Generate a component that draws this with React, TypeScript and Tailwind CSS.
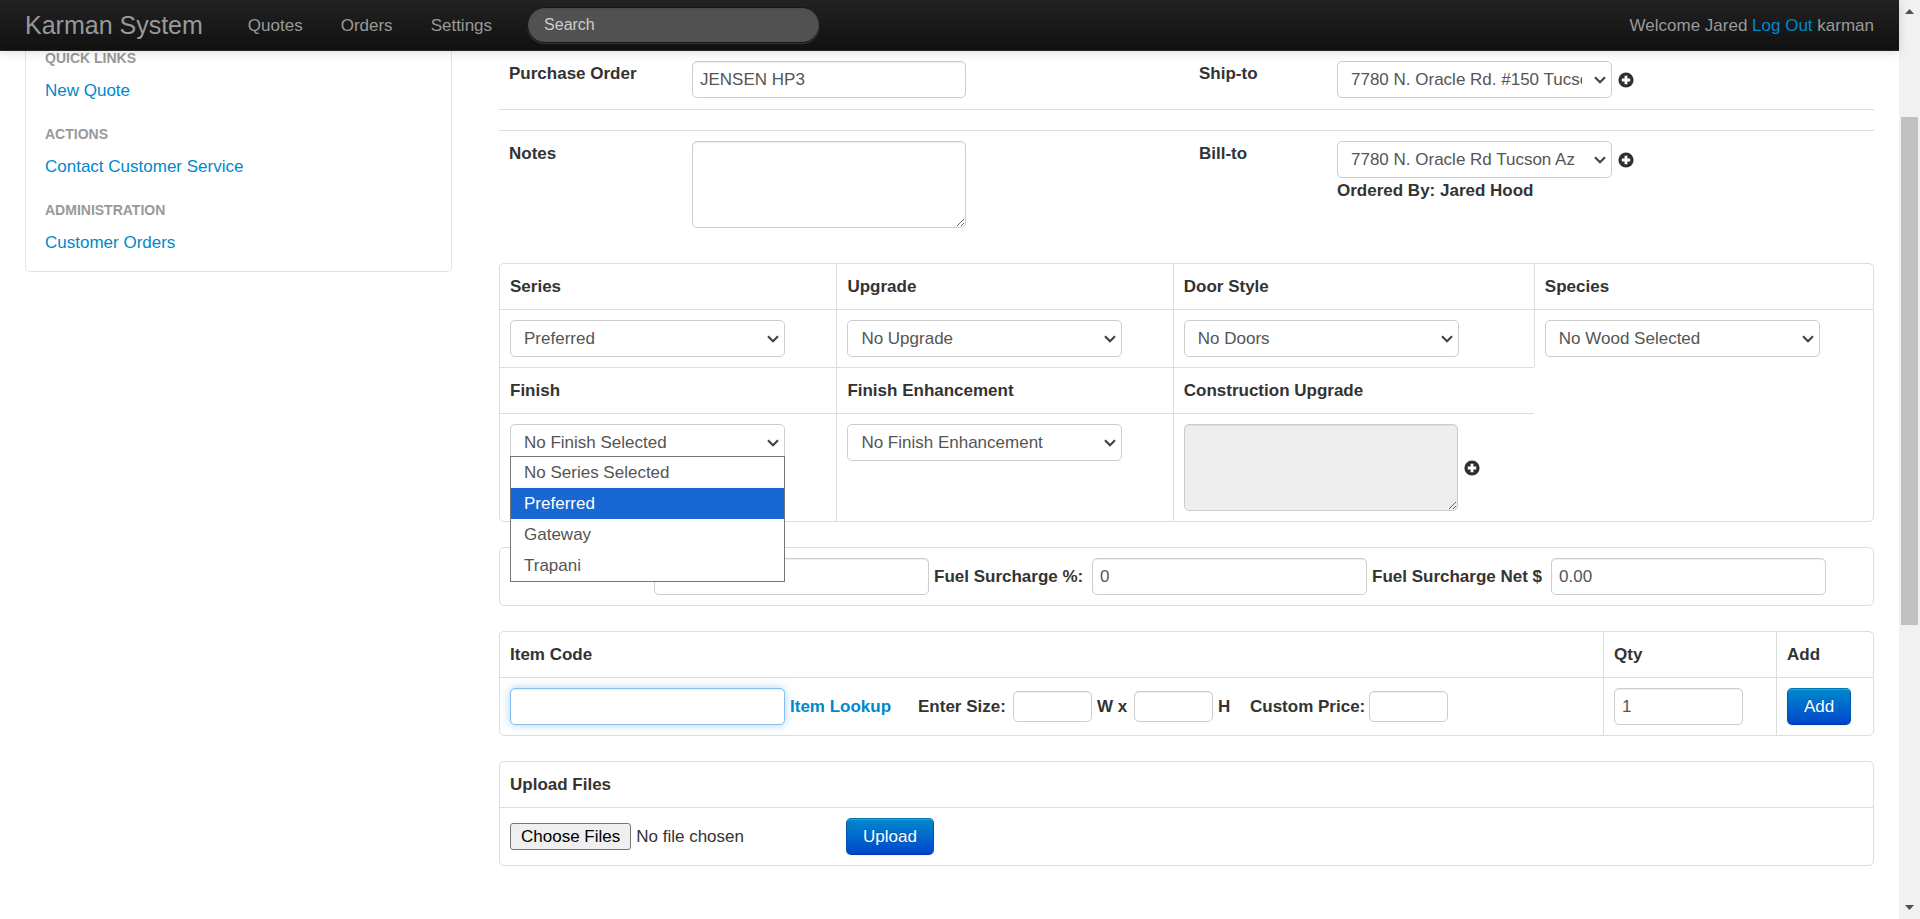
import React, { useState } from "react";
import clsx from "clsx";

interface Option {
  value: string;
  label: string;
}

interface SelectBoxProps {
  id: string;
  options: Option[];
  children?: React.ReactNode;
}

const seriesOptions: Option[] = [
  { value: "preferred", label: "Preferred" },
  { value: "none", label: "No Series Selected" },
  { value: "gateway", label: "Gateway" },
  { value: "trapani", label: "Trapani" },
];

const menuItems = ["No Series Selected", "Preferred", "Gateway", "Trapani"];

const sideLinks = [
  { header: "Quick Links", link: "New Quote" },
  { header: "Actions", link: "Contact Customer Service" },
  { header: "Administration", link: "Customer Orders" },
];

const fieldClass =
  "block h-[37px] rounded-[5px] border border-[#ccc] bg-white px-[7px] text-[#555] shadow-[inset_0_1px_1px_rgba(0,0,0,0.075)] outline-none";
const areaClass =
  "block h-[87px] w-[274px] resize rounded-[5px] border border-[#ccc] px-[7px] py-[4px] text-[#555] shadow-[inset_0_1px_1px_rgba(0,0,0,0.075)] outline-none";
const smallFieldClass =
  "block h-[31px] w-[79px] rounded-[5px] border border-[#ccc] bg-white px-[7px] text-[#555] shadow-[inset_0_1px_1px_rgba(0,0,0,0.075)] outline-none";
const buttonClass =
  "h-[37px] rounded-[5px] border border-[#0055b3] border-t-[#0077b3] border-b-[#003bb3] bg-linear-to-b from-[#0088cc] to-[#0044cc] px-[16px] text-white shadow-[inset_0_1px_0_rgba(255,255,255,0.2),0_1px_2px_rgba(0,0,0,0.05)] [text-shadow:0_-1px_0_rgba(0,0,0,0.25)]";
const cardClass = "mt-[25px] w-full border-separate border-spacing-0 rounded-[5px] border border-[#ddd]";
const headClass = "p-[10px] text-left align-top font-bold";
const cellClass = "border-t border-[#ddd] p-[10px] align-top";

function PlusIcon() {
  return (
    <svg width="16" height="16" viewBox="0 0 16 16" aria-hidden="true">
      <circle cx="8" cy="8" r="7.6" fill="#2f2f2f" />
      <path d="M6.6 3.8h2.8v2.8h2.8v2.8H9.4v2.8H6.6V9.4H3.8V6.6h2.8z" fill="#fff" />
    </svg>
  );
}

function SelectBox({ id, options, children }: SelectBoxProps) {
  return (
    <div className="relative w-[275px]">
      <select
        id={id}
        className="block h-[37px] w-full appearance-none rounded-[5px] border border-[#ccc] bg-white pr-[29px] pl-[13px] text-[#555] outline-none"
      >
        {options.map((o) => (
          <option key={o.value} value={o.value}>
            {o.label}
          </option>
        ))}
      </select>
      <svg
        className="pointer-events-none absolute top-[15px] right-[6px]"
        width="12"
        height="8"
        viewBox="0 0 12 8"
        fill="none"
        stroke="#444"
        strokeWidth="2.2"
        aria-hidden="true"
      >
        <path d="M1 1.3l5 5 5-5" />
      </svg>
      {children}
    </div>
  );
}

function Navbar() {
  return (
    <header className="relative z-20 flex h-[51px] items-center border-b border-[#252525] bg-linear-to-b from-[#222] to-[#111] px-[25px] text-[#999] shadow-[0_1px_10px_rgba(0,0,0,0.15)]">
      <a href="#" className="mr-[45px] text-[25px]">
        Karman System
      </a>
      <nav className="flex gap-[38px]">
        <a href="#">Quotes</a>
        <a href="#">Orders</a>
        <a href="#">Settings</a>
      </nav>
      <input
        type="text"
        placeholder="Search"
        aria-label="Search"
        className="ml-[35px] h-[36px] w-[293px] rounded-full border border-[#151515] bg-[#515151] px-[16px] text-[16px] text-white shadow-[inset_0_1px_2px_rgba(0,0,0,0.1),0_1px_0_rgba(255,255,255,0.15)] outline-none placeholder:text-[#ccc]"
      />
      <p className="ml-auto">
        Welcome Jared{" "}
        <a href="#" className="text-[#0088cc]">
          Log Out
        </a>{" "}
        karman
      </p>
    </header>
  );
}

function Sidebar() {
  return (
    <aside className="flex min-w-0 flex-col gap-[25px] self-start rounded-b-[5px] border border-t-0 border-[#e3e3e3] px-[19px] pt-[1px] pb-[16px]">
      {sideLinks.map((item) => (
        <div key={item.header}>
          <h3 className="text-[14px] leading-[13px] font-bold text-[#999] uppercase">{item.header}</h3>
          <a href="#" className="mt-[13px] block text-[#0088cc]">
            {item.link}
          </a>
        </div>
      ))}
    </aside>
  );
}

function SeriesMenu() {
  const [active, setActive] = useState(1);

  return (
    <ul role="listbox" aria-label="Series" className="absolute top-[32px] left-0 z-10 w-full border border-[#767676] bg-white">
      {menuItems.map((name, i) => (
        <li
          key={name}
          role="option"
          aria-selected={i === active}
          onMouseEnter={() => setActive(i)}
          className={clsx("h-[31px] px-[13px] leading-[31px]", i === active ? "bg-[#1967d2] text-white" : "text-[#555]")}
        >
          {name}
        </li>
      ))}
    </ul>
  );
}

function OrderDetails() {
  return (
    <>
      <div className="grid grid-cols-[183fr_507fr_138fr_547fr] border-b border-[#ddd] pt-[10px] pb-[11px]">
        <label htmlFor="po" className="pl-[10px] font-bold">
          Purchase Order
        </label>
        <div className="pl-[10px]">
          <input id="po" type="text" defaultValue="JENSEN HP3" className={clsx(fieldClass, "w-[274px]")} />
        </div>
        <label htmlFor="ship-to" className="pl-[10px] font-bold">
          Ship-to
        </label>
        <div className="flex items-center gap-[6px] pl-[10px]">
          <SelectBox id="ship-to" options={[{ value: "150", label: "7780 N. Oracle Rd. #150 Tucson Az" }]} />
          <button type="button" aria-label="Add ship-to address">
            <PlusIcon />
          </button>
        </div>
      </div>

      <div className="mt-[20px] grid grid-cols-[183fr_507fr_138fr_547fr] border-t border-[#ddd] py-[10px]">
        <label htmlFor="notes" className="pl-[10px] font-bold">
          Notes
        </label>
        <div className="pl-[10px]">
          <textarea id="notes" className={clsx(areaClass, "bg-white")} />
        </div>
        <label htmlFor="bill-to" className="pl-[10px] font-bold">
          Bill-to
        </label>
        <div className="pl-[10px]">
          <div className="flex items-center gap-[6px]">
            <SelectBox id="bill-to" options={[{ value: "az", label: "7780 N. Oracle Rd Tucson Az" }]} />
            <button type="button" aria-label="Add bill-to address">
              <PlusIcon />
            </button>
          </div>
          <p className="font-bold">Ordered By: Jared Hood</p>
        </div>
      </div>
    </>
  );
}

function SpecsTable() {
  return (
    <table className={clsx(cardClass, "table-fixed")}>
      <colgroup>
        <col className="w-[24.5%]" />
        <col className="w-[24.5%]" />
        <col className="w-[26.3%]" />
        <col />
      </colgroup>
      <tbody>
        <tr>
          <th className={headClass}>
            <label htmlFor="series">Series</label>
          </th>
          <th className={clsx(headClass, "border-l border-[#ddd]")}>
            <label htmlFor="upgrade">Upgrade</label>
          </th>
          <th className={clsx(headClass, "border-l border-[#ddd]")}>
            <label htmlFor="door-style">Door Style</label>
          </th>
          <th className={clsx(headClass, "border-l border-[#ddd]")}>
            <label htmlFor="species">Species</label>
          </th>
        </tr>
        <tr>
          <td className={cellClass}>
            <SelectBox id="series" options={seriesOptions} />
          </td>
          <td className={clsx(cellClass, "border-l")}>
            <SelectBox id="upgrade" options={[{ value: "none", label: "No Upgrade" }]} />
          </td>
          <td className={clsx(cellClass, "border-l")}>
            <SelectBox id="door-style" options={[{ value: "none", label: "No Doors" }]} />
          </td>
          <td className={clsx(cellClass, "border-l")}>
            <SelectBox id="species" options={[{ value: "none", label: "No Wood Selected" }]} />
          </td>
        </tr>
        <tr>
          <th className={clsx(headClass, "border-t border-[#ddd]")}>
            <label htmlFor="finish">Finish</label>
          </th>
          <th className={clsx(headClass, "border-t border-l border-[#ddd]")}>
            <label htmlFor="enhancement">Finish Enhancement</label>
          </th>
          <th className={clsx(headClass, "border-t border-l border-[#ddd]")}>
            <label htmlFor="construction">Construction Upgrade</label>
          </th>
        </tr>
        <tr>
          <td className={cellClass}>
            <SelectBox id="finish" options={[{ value: "none", label: "No Finish Selected" }]}>
              <SeriesMenu />
            </SelectBox>
          </td>
          <td className={clsx(cellClass, "border-l")}>
            <SelectBox id="enhancement" options={[{ value: "none", label: "No Finish Enhancement" }]} />
          </td>
          <td className={clsx(cellClass, "border-l")}>
            <div className="flex items-center gap-[6px]">
              <textarea id="construction" readOnly className={clsx(areaClass, "bg-[#eee]")} />
              <button type="button" aria-label="Add construction upgrade">
                <PlusIcon />
              </button>
            </div>
          </td>
        </tr>
      </tbody>
    </table>
  );
}

function SurchargeRow() {
  return (
    <div className="mt-[25px] flex items-center gap-[5px] rounded-[5px] border border-[#ddd] py-[10px] pr-[10px] pl-[154px] font-bold">
      <input type="text" aria-label="Discount" className={clsx(fieldClass, "w-[275px] font-normal")} />
      <label htmlFor="fuel-percent" className="w-[153px]">
        Fuel Surcharge %:
      </label>
      <input id="fuel-percent" type="text" defaultValue="0" className={clsx(fieldClass, "w-[275px] font-normal")} />
      <label htmlFor="fuel-net" className="w-[174px]">
        Fuel Surcharge Net $
      </label>
      <input id="fuel-net" type="text" defaultValue="0.00" className={clsx(fieldClass, "w-[275px] font-normal")} />
    </div>
  );
}

function ItemTable() {
  return (
    <table className={clsx(cardClass, "table-fixed")}>
      <colgroup>
        <col />
        <col className="w-[173px]" />
        <col className="w-[97px]" />
      </colgroup>
      <thead>
        <tr>
          <th className={headClass}>
            <label htmlFor="item-code">Item Code</label>
          </th>
          <th className={clsx(headClass, "border-l border-[#ddd]")}>
            <label htmlFor="qty">Qty</label>
          </th>
          <th className={clsx(headClass, "border-l border-[#ddd]")}>Add</th>
        </tr>
      </thead>
      <tbody>
        <tr>
          <td className={cellClass}>
            <div className="flex items-center gap-[5px] font-bold">
              <input
                id="item-code"
                type="text"
                className="block h-[37px] w-[275px] rounded-[5px] border border-[#86bfee] bg-white px-[7px] font-normal text-[#555] shadow-[inset_0_1px_1px_rgba(0,0,0,0.075),0_0_9px_rgba(82,168,236,0.5)] outline-none"
              />
              <a href="#" className="w-[123px] text-[#0088cc]">
                Item Lookup
              </a>
              <label htmlFor="width" className="w-[90px]">
                Enter Size:
              </label>
              <input id="width" type="text" className={smallFieldClass} />
              <label htmlFor="height" className="w-[32px]">
                W x
              </label>
              <input id="height" type="text" className={smallFieldClass} />
              <span className="w-[27px]">H</span>
              <div className="flex items-center">
                <label htmlFor="custom-price" className="w-[119px]">
                  Custom Price:
                </label>
                <input id="custom-price" type="text" className={smallFieldClass} />
              </div>
            </div>
          </td>
          <td className={clsx(cellClass, "border-l")}>
            <input id="qty" type="text" defaultValue="1" className={clsx(fieldClass, "w-[129px]")} />
          </td>
          <td className={clsx(cellClass, "border-l")}>
            <button type="button" className={clsx(buttonClass, "block")}>
              Add
            </button>
          </td>
        </tr>
      </tbody>
    </table>
  );
}

function UploadFiles() {
  return (
    <section className="mt-[25px] rounded-[5px] border border-[#ddd]">
      <h2 className="p-[10px] font-bold">
        <label htmlFor="files">Upload Files</label>
      </h2>
      <div className="flex items-center border-t border-[#ddd] p-[10px]">
        <input
          id="files"
          type="file"
          multiple
          className="w-[336px] file:mr-[5px] file:h-[27px] file:rounded-[3px] file:border file:border-[#767676] file:bg-[#efefef] file:px-[10px] file:leading-[25px] file:text-black"
        />
        <button type="button" className={buttonClass}>
          Upload
        </button>
      </div>
    </section>
  );
}

// Window scrollbar, track split by the thumb position
function Scrollbar() {
  return (
    <div className="sticky top-0 flex h-screen w-[21px] shrink-0 flex-col items-center bg-[#f1f1f1]" aria-hidden="true">
      <svg className="shrink-0" width="21" height="21" viewBox="0 0 21 21">
        <path d="M6 14l4.500-5 4.500 5z" fill="#505050" />
      </svg>
      <div className="flex-[96]" />
      <div className="w-[17px] flex-[508] bg-[#c1c1c1]" />
      <div className="flex-[273]" />
      <svg className="shrink-0" width="21" height="21" viewBox="0 0 21 21">
        <path d="M6 7l4.500 5 4.500-5z" fill="#505050" />
      </svg>
    </div>
  );
}

export default function App() {
  return (
    <div className="flex min-h-screen bg-white font-['Liberation_Sans',Arial,sans-serif] text-[17px] leading-[25px] text-[#333]">
      <div className="min-w-0 flex-1">
        <Navbar />
        <div className="grid grid-cols-[427fr_1375fr] gap-[47px] px-[25px]">
          <Sidebar />
          <main className="min-w-0">
            <OrderDetails />
            <SpecsTable />
            <SurchargeRow />
            <ItemTable />
            <UploadFiles />
          </main>
        </div>
      </div>
      <Scrollbar />
    </div>
  );
}
